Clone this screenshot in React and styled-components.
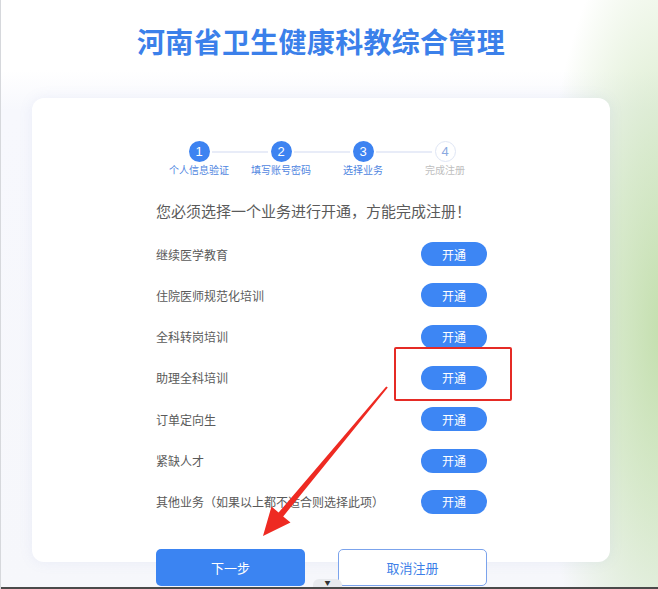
import styled, { createGlobalStyle } from "styled-components";

const GlobalStyle = createGlobalStyle`
  html, body {
    margin: 0;
    padding: 0;
    background: #fff;
  }
  body {
    font-family: "Noto Sans CJK SC", "Noto Sans", sans-serif;
  }
`;

const Page = styled.div`
  position: relative;
  width: 658px;
  height: 589px;
  overflow: hidden;
  box-sizing: border-box;
  border-left: 1px solid #d6d8dc;
  display: flex;
  flex-direction: column;
  background:
    radial-gradient(ellipse 130px 420px at 665px 330px, rgba(192, 221, 168, 0.95) 0%, rgba(200, 226, 180, 0.65) 45%, rgba(230, 242, 222, 0) 100%),
    linear-gradient(to bottom, #ffffff 0, #ffffff 70px, #f7f8fd 110px, #f6f7fb 100%);
`;

const Title = styled.h1`
  margin: 25px 0 0 31px;
  width: 578px;
  text-align: center;
  font-size: 28px;
  line-height: 32px;
  font-weight: 700;
  color: #3b80ea;
  letter-spacing: 0.3px;
`;

const Card = styled.div`
  margin: 41px 0 0 31px;
  width: 578px;
  box-sizing: border-box;
  padding: 43px 0 48px;
  background: #fff;
  border-radius: 12px;
  box-shadow: 0 0 14px rgba(120, 140, 210, 0.1);
  display: flex;
  flex-direction: column;
  align-items: center;
`;

const Steps = styled.div`
  display: grid;
  grid-template-columns: repeat(4, 82px);
  margin-left: 2px;
`;

const Step = styled.div`
  position: relative;
  display: flex;
  flex-direction: column;
  align-items: center;

  &:not(:last-child)::after {
    content: "";
    position: absolute;
    top: 10px;
    left: calc(50% + 13px);
    width: 56px;
    height: 2px;
    background: #e8ecf8;
  }
`;

const Circle = styled.div`
  width: 21px;
  height: 21px;
  box-sizing: border-box;
  border-radius: 50%;
  display: flex;
  align-items: center;
  justify-content: center;
  font-family: "Liberation Sans", Arial, sans-serif;
  font-size: 13px;
  background: ${(p) => (p.$done ? "#3d83f1" : "#fff")};
  color: ${(p) => (p.$done ? "#fff" : "#8aa9e0")};
  border: ${(p) => (p.$done ? "none" : "1px solid #dfe6f5")};
`;

const StepLabel = styled.div`
  margin-top: 1px;
  font-size: 10px;
  line-height: 14px;
  white-space: nowrap;
  color: ${(p) => (p.$done ? "#4f86df" : "#c0c0c0")};
`;

const Content = styled.div`
  width: 331px;
  margin-left: 1px;
`;

const Notice = styled.div`
  margin-top: 24px;
  font-size: 15px;
  line-height: 20px;
  color: #5a5a5a;
  white-space: nowrap;
`;

const List = styled.div`
  margin-top: 21px;
  display: grid;
  grid-auto-rows: 24px;
  row-gap: 17.33px;
`;

const Row = styled.div`
  display: flex;
  align-items: center;
  justify-content: space-between;
`;

const RowLabel = styled.span`
  font-size: 12px;
  color: #5a5a5a;
  white-space: nowrap;
`;

const OpenButton = styled.button`
  width: 66px;
  height: 24px;
  border: none;
  border-radius: 12px;
  background: #3d86f4;
  color: #fff;
  font-family: inherit;
  font-size: 12px;
  padding: 0;
  cursor: pointer;
`;

const Actions = styled.div`
  margin: -13px 0 0 155px;
  display: flex;
  gap: 33px;
`;

const ActionButton = styled.button`
  width: 149px;
  height: 37px;
  box-sizing: border-box;
  border-radius: 5px;
  font-family: inherit;
  font-size: 13px;
  cursor: pointer;
  background: ${(p) => (p.$primary ? "#3b84f2" : "#fff")};
  color: ${(p) => (p.$primary ? "#fff" : "#3d7fe8")};
  border: ${(p) => (p.$primary ? "none" : "1px solid #7ba3ec")};
`;

const BottomBar = styled.div`
  margin-top: auto;
  height: 2px;
  background: #4a4a4a;
`;

const BottomTab = styled.div`
  position: absolute;
  left: 312px;
  bottom: 2px;
  width: 29px;
  height: 8px;
  border-radius: 6px 6px 0 0;
  background: #e8eaee;
  display: flex;
  justify-content: center;
  align-items: center;
  font-size: 6px;
  color: #333;
  line-height: 1;
`;

const Highlight = styled.div`
  position: absolute;
  left: 393px;
  top: 347px;
  width: 118px;
  height: 54px;
  box-sizing: border-box;
  border: 2px solid #e52b25;
  border-radius: 2px;
  pointer-events: none;
`;

const Arrow = styled.svg`
  position: absolute;
  left: 0;
  top: 0;
  width: 658px;
  height: 589px;
  pointer-events: none;
`;

const steps = [
  { n: 1, label: "个人信息验证", done: true },
  { n: 2, label: "填写账号密码", done: true },
  { n: 3, label: "选择业务", done: true },
  { n: 4, label: "完成注册", done: false },
];

const services = [
  "继续医学教育",
  "住院医师规范化培训",
  "全科转岗培训",
  "助理全科培训",
  "订单定向生",
  "紧缺人才",
  "其他业务（如果以上都不适合则选择此项）",
];

export default function App() {
  return (
    <>
      <GlobalStyle />
      <Page>
        <Title>河南省卫生健康科教综合管理</Title>
        <Card>
          <Steps>
            {steps.map((s) => (
              <Step key={s.n}>
                <Circle $done={s.done}>{s.n}</Circle>
                <StepLabel $done={s.done}>{s.label}</StepLabel>
              </Step>
            ))}
          </Steps>
          <Content>
            <Notice>您必须选择一个业务进行开通，方能完成注册！</Notice>
            <List>
              {services.map((name) => (
                <Row key={name}>
                  <RowLabel>{name}</RowLabel>
                  <OpenButton>开通</OpenButton>
                </Row>
              ))}
            </List>
          </Content>
        </Card>
        <Actions>
          <ActionButton $primary>下一步</ActionButton>
          <ActionButton>取消注册</ActionButton>
        </Actions>
        <BottomBar />
        <BottomTab>▼</BottomTab>
        <Highlight />
        <Arrow viewBox="0 0 658 589">
          <polygon
            points="262,536 289.5,522.5 282.2,516.4 386.8,387.6 385.2,386.4 277.6,512.6 270.5,506.5"
            fill="#ee2a22"
          />
        </Arrow>
      </Page>
    </>
  );
}
